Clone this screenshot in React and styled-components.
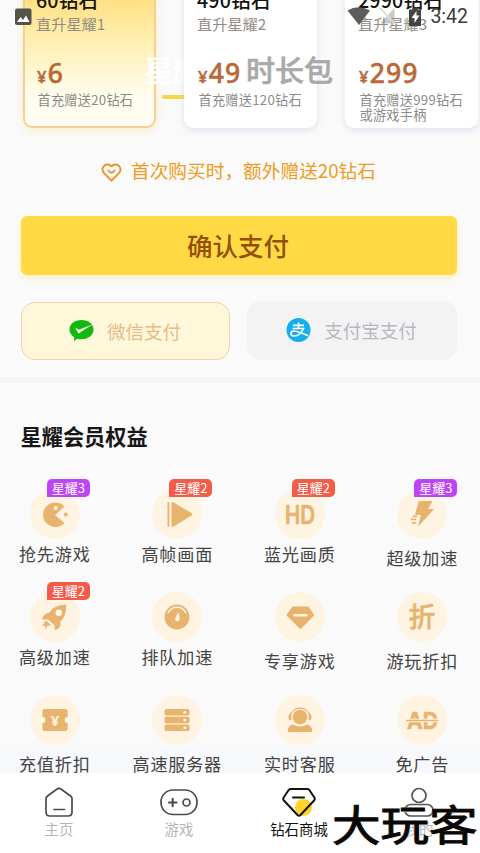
import React from 'react';
import styled, {createGlobalStyle} from "styled-components"

const GlobalStyle = createGlobalStyle`
  * {
    box-sizing: border-box;
  }

  body {
    margin: 0;
    font-family: "Noto Sans CJK SC", "Noto Sans", sans-serif;
  }
`
const Screen = styled.div`
  position: relative;
  display: flex;
  flex-direction: column;
  width: 480px;
  height: 853px;
  overflow: hidden;
  background: #fafafa;
`
const Content = styled.main`
  flex: 1;
  min-height: 0;
  overflow: hidden;
  background: linear-gradient(#fafafa 738px, #f6f8fb 752px);
`

/* status bar, floats over the scrolled cards */
const StatusBar = styled.div`
  position: absolute;
  z-index: 3;
  top: 4px;
  left: 14px;
  right: 12px;
  height: 24px;
  display: flex;
  align-items: center;

  svg:first-child {
    margin-top: -3px;
  }
`
const Clock = styled.span`
  margin: 2px 0 0 9px;
  font: 400 19.5px/24px Roboto, sans-serif;
  color: #3c3c3c;
`
const Spacer = styled.span`
  flex: 1;
`

/* tabs, the cards scroll underneath */
const Tab = styled.span`
  position: absolute;
  z-index: ${props => props.$active ? 0 : 2};
  top: 51px;
  left: ${props => props.$active ? 144 : 246}px;
  font-size: 29px;
  line-height: 36px;
  font-weight: ${props => props.$active ? 700 : 500};
  color: ${props => props.$active ? '#fff' : '#a9a9a9'};
  -webkit-text-stroke: ${props => props.$active ? 0 : '.6px #a9a9a9'};
`
const TabLine = styled.i`
  position: absolute;
  top: 95px;
  left: 162px;
  width: 30px;
  height: 4px;
  border-radius: 2px;
  background: #f5d648;
`

const Cards = styled.div`
  display: flex;
  align-items: flex-end;
  gap: 28px;
  height: 128px;
  padding-left: 23px;
`
const Card = styled.div`
  position: relative;
  z-index: ${props => props.$active ? 0 : 1};
  flex: none;
  width: 133px;
  height: 160px;
  padding: ${props => props.$active ? '17px 0 0 11px' : '19px 0 0 13px'};
  border-radius: 9px;
  border: ${props => props.$active ? '2px solid #f5cf98' : 'none'};
  background: ${props => props.$active
    ? 'linear-gradient(#ffe185 20%, #ffedaa 42%, #fff6cd 62%, #fffdf0 82%, #fffdf3)'
    : '#fff'};
  box-shadow: ${props => props.$active
    ? '0 3px 8px rgba(250, 225, 140, .45)'
    : '0 2px 6px rgba(190, 202, 230, .5)'};
`
const CardTitle = styled.div`
  font-size: 19.6px;
  line-height: 26px;
  font-weight: 500;
  letter-spacing: .2px;
  color: #171410;
  white-space: nowrap;
`
const CardLevel = styled.div`
  font-size: 15.2px;
  line-height: 20px;
  color: #918d84;
`
const Price = styled.div`
  display: flex;
  align-items: baseline;
  height: 38px;
  margin: 21px 0 0 1px;
  font: 500 26.5px/38px "Noto Sans", sans-serif;
  letter-spacing: 1px;
  color: #b96838;
  -webkit-text-stroke: .5px #b96838;

  small {
    font-size: 16.5px;
    letter-spacing: 1.4px;
  }
`
const CardNote = styled.div`
  margin-left: 1.5px;
  font-size: 13.2px;
  line-height: 15px;
  letter-spacing: .25px;
  color: #8b8b89;
  white-space: pre;
  height: 37px;
`

const Tip = styled.div`
  display: flex;
  align-items: center;
  height: 22px;
  margin: 31px 0 0 101px;
  gap: 9px;
  font-size: 18.7px;
  line-height: 22px;
  color: #ef9a20;
  white-space: nowrap;

  svg {
    margin-top: 6px;
  }
`
const ConfirmButton = styled.button`
  display: block;
  width: 436px;
  height: 59px;
  margin: 35px 0 0 21px;
  padding: 0 2px 2px 0;
  border: none;
  border-radius: 6px;
  background: #ffda45;
  box-shadow: 0 3px 7px rgba(255, 222, 90, .35);
  font-family: inherit;
  font-size: 25.5px;
  font-weight: 500;
  color: #925008;
`
const PayRow = styled.div`
  display: flex;
  gap: 17px;
  height: 59px;
  margin: 26px 0 0 21px;
`
const PayButton = styled.button`
  display: flex;
  align-items: center;
  justify-content: center;
  gap: 13px;
  width: ${props => props.$active ? 209 : 210}px;
  padding: 0 1px 1px 0;
  border-radius: 14px;
  border: ${props => props.$active ? '1.5px solid #f1d3a5' : 'none'};
  margin: ${props => props.$active ? '1px 0 0' : 0};
  background: ${props => props.$active ? '#fff7d9' : '#f4f3f4'};
  color: ${props => props.$active ? '#e5bd87' : '#b8b8c2'};
  font-family: inherit;
  font-size: 18.5px;
`
const Divider = styled.div`
  height: 6px;
  margin-top: 17px;
  background: #f5f5fa;
`
const Heading = styled.h2`
  margin: 38px 0 0 20.5px;
  font-size: 21.2px;
  line-height: 30px;
  font-weight: 700;
  color: #17171a;
`
const Grid = styled.div`
  display: grid;
  grid-template-columns: repeat(4, 122.5px);
  grid-auto-rows: 103px;
  margin: 38px 0 0 -6.5px;
`
const Benefit = styled.div`
  display: flex;
  flex-direction: column;
  align-items: center;
`
const IconCircle = styled.div`
  position: relative;
  flex: none;
  width: 50px;
  height: 50px;
  border-radius: 50%;
  background: #fff3e1;

  svg {
    display: block;
  }
`
const Badge = styled.span`
  position: absolute;
  top: -10px;
  left: 17px;
  width: 43px;
  height: 18px;
  border-radius: 5px 5px 5px 0;
  background: ${props => props.$level === 3 ? '#bd44f3' : '#f25c48'};
  color: #fff;
  font-size: 13px;
  line-height: 17px;
  text-align: center;
`
const BenefitName = styled.span`
  margin-top: ${props => props.$low ? 7 : 3}px;
  font-size: 17.1px;
  line-height: 23px;
  letter-spacing: .8px;
  color: #444;
  white-space: nowrap;
`

const Nav = styled.nav`
  flex: none;
  display: grid;
  grid-template-columns: repeat(4, 120px);
  height: 80px;
  padding-top: 13px;
  margin-left: -1px;
  background: #fff;
`
const NavItem = styled.div`
  display: flex;
  flex-direction: column;
  align-items: center;
  font-size: 14.4px;
  line-height: 19px;
  color: ${props => props.$active ? '#111' : '#b5b5b5'};

  svg {
    margin-bottom: 1px;
  }
`
const SiteMark = styled.div`
  position: absolute;
  left: 332px;
  top: 795px;
  font-size: 48.5px;
  line-height: 56px;
  font-weight: 400;
  color: #080808;
  white-space: nowrap;
  transform: scaleY(.86);
  -webkit-text-stroke: 1.1px #080808;
  text-shadow: 0 0 2px #f0eadb, 0 0 2px #f0eadb, 1px 1px 1px #f0eadb;
`

const GOLD = '#e8b36d'
const CREAM = '#fff3e1'

const icons = {
    pacman: <g fill={GOLD}>
        <path d="M25 26 34.5 17.5A12.3 12.3 0 1 0 34.5 34Z"/>
        <circle cx="25.7" cy="19" r="2" fill={CREAM}/>
        <circle cx="35.7" cy="25.5" r="2"/>
    </g>,
    play: <g fill={GOLD}>
        <rect x="15.5" y="13" width="1.8" height="25" rx=".8"/>
        <path d="M19.5 14.2q0-1.8 1.8-1L39.5 24q1.8 1.3 0 2.6L21.3 37.7q-1.8.8-1.8-1Z"/>
    </g>,
    hd: <text x="10" y="35" textLength="30" lengthAdjust="spacingAndGlyphs" fill={GOLD} stroke={GOLD}
              strokeWidth=".7" strokeLinejoin="round" fontFamily="Inter" fontSize="26" fontWeight="600">HD</text>,
    bolt: <g fill={GOLD}>
        <path d="M22.3 12h12.2q1 0 .5 1l-4 7h5q1.2 0 .4 1L22 36.5q-1 1-.7-.5L24 26h-5q-1.2 0-.8-1l3.3-12q.2-1 .8-1Z"/>
        <path d="M16.5 27.3h3M14.5 30.3h4M15.5 33.8h3" stroke={GOLD} strokeWidth="1.7" strokeLinecap="round"/>
    </g>,
    rocket: <g fill={GOLD}>
        <path d="M35.5 12.5q1 0 .8 1Q36 25 30.5 29.5V33q-1 3.500-5 5-.8 0-.8-1v-3.500L18 27.500h-5q-1.500 0-.8-1 2.800-5.800 6.500-5.500 5-8 16.800-8.500Z"/>
        <circle cx="28.8" cy="20.8" r="3.2" fill={CREAM}/>
        <path d="M15.500 28.500l3 2 2.500 3.500-3.500-.5-1.500 4-1-3.700-3.200.2 2.200-2.500Z"/>
    </g>,
    gauge: <g>
        <circle cx="25" cy="25" r="12.4" fill={GOLD}/>
        <path d="M16.300 20.500a9.800 9.800 0 0 1 17.400 0" fill="none" stroke={CREAM} strokeWidth="1.600" strokeLinecap="round"/>
        <path d="M26.300 20.500q2.300 6 1 7.800-2 2-4 0-1-1.800 3-7.800Z" fill={CREAM}/>
    </g>,
    gem: <g>
        <path d="M18.500 14.500h14q1 0 1.600.8l4.600 7q.6.9-.1 1.700L26.300 36.500q-.8.8-1.600 0L12 24q-.7-.8-.1-1.700l5-7q.6-.8 1.600-.8Z" fill={GOLD}/>
        <path d="M19.500 23.200h12" stroke={CREAM} strokeWidth="2.400" strokeLinecap="round"/>
    </g>,
    discount: <text x="11.500" y="34.500" textLength="27" lengthAdjust="spacingAndGlyphs" fill={GOLD}
                    stroke={GOLD} strokeWidth=".5" strokeLinejoin="round" fontSize="27" fontWeight="500">折</text>,
    coupon: <g>
        <path d="M15 14h20q2.500 0 2.500 2.500v5.500a3 3 0 0 0 0 6v5.500q0 2.500-2.500 2.500H15q-2.500 0-2.500-2.500V28a3 3 0 0 0 0-6v-5.500Q12.500 14 15 14Z" fill={GOLD}/>
        <text x="25" y="30.500" textAnchor="middle" fill={CREAM} fontFamily="Noto Sans" fontSize="15" fontWeight="700">¥</text>
    </g>,
    server: <g fill={GOLD}>
        {[14, 21.8, 29.6].map(y => <g key={y}>
            <rect x="12.500" y={y} width="25" height="6.500" rx="1.700"/>
            <circle cx="32.800" cy={y + 3.2} r="1.500" fill={CREAM}/>
        </g>)}
    </g>,
    support: <g fill={GOLD}>
        <circle cx="25" cy="22" r="7.300"/>
        <path d="M15 21a10.200 9.800 0 0 1 20 0" fill="none" stroke={GOLD} strokeWidth="1.200"/>
        <path d="M16.300 18.500v7q-2.800-.3-2.800-3.500t2.800-3.500ZM33.700 18.500v7q2.800-.3 2.800-3.500t-2.800-3.500Z"/>
        <path d="M18 29.500q7 4 14 0 4.500.5 5.300 6.800 0 .7-.8.700h-23q-.8 0-.8-.7Q13.500 30 18 29.500Z"/>
    </g>,
    noAds: <g>
        <text x="10" y="34" textLength="31" lengthAdjust="spacingAndGlyphs" fill={GOLD} stroke={GOLD}
              strokeWidth=".5" fontFamily="Inter" fontSize="23" fontWeight="700">AD</text>
        <path d="M8 25.500h34" stroke={CREAM} strokeWidth="3.400"/>
        <path d="M9.500 25.500h31" stroke={GOLD} strokeWidth="1.600" strokeLinecap="round"/>
    </g>,
}

const cards = [
    {title: '60钻石', level: '直升星耀1', price: '6', note: '首充赠送20钻石', active: true},
    {title: '490钻石', level: '直升星耀2', price: '49', note: '首充赠送120钻石'},
    {title: '2990钻石', level: '直升星耀3', price: '299', note: '首充赠送999钻石\n或游戏手柄'},
]

const benefits = [
    {name: '抢先游戏', icon: 'pacman', level: 3},
    {name: '高帧画面', icon: 'play', level: 2},
    {name: '蓝光画质', icon: 'hd', level: 2},
    {name: '超级加速', icon: 'bolt', level: 3, low: true},
    {name: '高级加速', icon: 'rocket', level: 2},
    {name: '排队加速', icon: 'gauge'},
    {name: '专享游戏', icon: 'gem', low: true},
    {name: '游玩折扣', icon: 'discount', low: true},
    {name: '充值折扣', icon: 'coupon', low: true},
    {name: '高速服务器', icon: 'server', low: true},
    {name: '实时客服', icon: 'support', low: true},
    {name: '免广告', icon: 'noAds', low: true},
]

const StatusIcons = () => (
    <StatusBar>
        <svg width="18" height="20" viewBox="0 0 18 20">
            <rect x="1" y="3.500" width="16.500" height="16.500" rx="2" fill="#56534b"/>
            <path d="M3 17l3.500-5 2.500 3 3-4.500 3.500 6.500Z" fill="#fff"/>
        </svg>
        <Spacer/>
        <svg width="76" height="24" viewBox="0 0 76 24">
            <path d="M2.500 6.500Q13 0 25 6.500L14 21Z" fill="#5c5c5c"/>
            <path d="M49.500 4v15.500H35L42 12Z" fill="#777" opacity=".4"/>
            <path d="M35 4l14 15" stroke="#fff" strokeWidth="2"/>
            <path d="M35 4l14 15" stroke="#999" strokeWidth=".8"/>
            <path d="M67.500 3.500h5v2H76V22H64V5.500h3.500Z" fill="#444"/>
            <path d="M71.500 7l-5 7h3v5l5-7.500h-3Z" fill="#fff"/>
        </svg>
        <Clock>3:42</Clock>
    </StatusBar>
)

const HeartIcon = () => (
    <svg width="21" height="20" viewBox="0 0 21 20" fill="none" stroke="#ef9428" strokeWidth="1.900"
         strokeLinecap="round" strokeLinejoin="round">
        <path d="M10.500 3.400C8 .6 4.500 1 2.700 3.300c-1.800 2.400-1.300 5.100.6 7l7.200 7.400 7.200-7.400c1.900-1.900 2.400-4.600.6-7C16.500 1 13 .6 10.500 3.400Z"/>
        <path d="M7.500 7.500q3 4.400 6 0"/>
    </svg>
)

const WechatIcon = () => (
    <svg width="25" height="22" viewBox="0 0 25 22">
        <path d="M12.500 0C19.500 0 24.500 4 24.500 9.600s-5 9.700-12 9.700c-1.600 0-3-.2-4.300-.6L4.800 21.300l.4-4.100C2.200 15.500.5 12.800.5 9.600.5 4 5.500 0 12.500 0Z" fill="#0fb90f"/>
        <path d="M6 7.500l3 1.800q.7.400 1.400.1L24 4.200 10.200 13q-.9.500-1.300-.4Z" fill="#fff7d9"/>
    </svg>
)

const AlipayIcon = () => (
    <svg width="25" height="24" viewBox="0 0 25 24">
        <circle cx="12.500" cy="12" r="12" fill="#17aeee"/>
        <path d="M7 7.300h11M12.500 4.500v6M6.500 10.500h11q-3.500 7.500-9 7.500-3.500 0-3.700-2.300 0-2.400 3.300-2.700 3 0 14 4.700"
              fill="none" stroke="#fff" strokeWidth="1.700"/>
    </svg>
)

const HomeIcon = () => (
    <svg width="38" height="32" viewBox="0 0 38 32" fill="none" stroke="#4b4b4b" strokeWidth="1.700" strokeLinecap="round">
        <path d="M6 12.500q0-1.500 1.200-2.300L16.700 3.200q2.300-1.500 4.600 0l9.500 7q1.200.8 1.200 2.300V26q0 4-4 4H10q-4 0-4-4Z"/>
        <path d="M14 23.500h10.500"/>
    </svg>
)

const GameIcon = () => (
    <svg width="38" height="32" viewBox="0 0 38 32" fill="none" stroke="#4b4b4b" strokeWidth="1.700" strokeLinecap="round">
        <rect x="1" y="4" width="36" height="24.500" rx="12"/>
        <path d="M9 16.500h7.500M12.700 12.700v7.500" strokeWidth="2"/>
        <circle cx="26.500" cy="16.500" r="3.500"/>
    </svg>
)

const GemIcon = () => (
    <svg width="38" height="32" viewBox="0 0 38 32" fill="none" stroke="#111" strokeWidth="2" strokeLinecap="round"
         strokeLinejoin="round">
        <circle cx="23.500" cy="21.500" r="8.500" fill="#ffd52c" stroke="none"/>
        <path d="M10.500 3h17q1 0 1.700.8l5.300 8q.8 1.300-.2 2.500L20.500 29q-1.500 1.500-3 0L3.700 14.300q-1-1.200-.2-2.500l5.300-8Q9.500 3 10.500 3Z"/>
        <path d="M13 11.500h11"/>
    </svg>
)

const UserIcon = () => (
    <svg width="38" height="32" viewBox="0 0 38 32" fill="none" stroke="#555" strokeWidth="1.700">
        <circle cx="19" cy="9.500" r="7"/>
        <rect x="5" y="18.500" width="28" height="11.500" rx="5.700"/>
    </svg>
)

const App = () => {
    return (
        <Screen>
            <GlobalStyle/>
            <StatusIcons/>
            <Content>
                <TabLine/>
                <Cards>
                    {cards.map(card => (
                        <Card key={card.title} $active={card.active}>
                            <CardTitle>{card.title}</CardTitle>
                            <CardLevel>{card.level}</CardLevel>
                            <Price><small>¥</small>{card.price}</Price>
                            <CardNote>{card.note}</CardNote>
                        </Card>
                    ))}
                </Cards>
                <Tab $active>星耀</Tab>
                <Tab>时长包</Tab>
                <Tip><HeartIcon/>首次购买时，额外赠送20钻石</Tip>
                <ConfirmButton>确认支付</ConfirmButton>
                <PayRow>
                    <PayButton $active><WechatIcon/>微信支付</PayButton>
                    <PayButton><AlipayIcon/>支付宝支付</PayButton>
                </PayRow>
                <Divider/>
                <Heading>星耀会员权益</Heading>
                <Grid>
                    {benefits.map(item => (
                        <Benefit key={item.name}>
                            <IconCircle>
                                <svg width="50" height="50" viewBox="0 0 50 50">{icons[item.icon]}</svg>
                                {item.level && <Badge $level={item.level}>星耀{item.level}</Badge>}
                            </IconCircle>
                            <BenefitName $low={item.low}>{item.name}</BenefitName>
                        </Benefit>
                    ))}
                </Grid>
            </Content>
            <Nav>
                <NavItem><HomeIcon/>主页</NavItem>
                <NavItem><GameIcon/>游戏</NavItem>
                <NavItem $active><GemIcon/>钻石商城</NavItem>
                <NavItem><UserIcon/>我的</NavItem>
            </Nav>
            <SiteMark>大玩客</SiteMark>
        </Screen>
    );
};

export default App;
